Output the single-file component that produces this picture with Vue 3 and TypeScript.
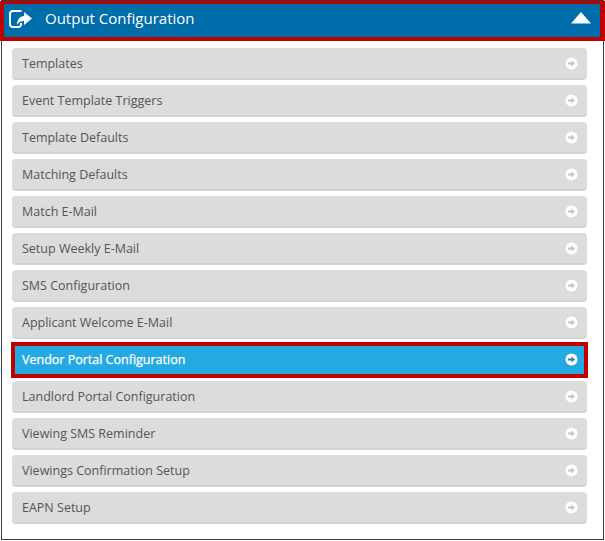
<script setup lang="ts">
const items: string[] = [
  'Templates',
  'Event Template Triggers',
  'Template Defaults',
  'Matching Defaults',
  'Match E-Mail',
  'Setup Weekly E-Mail',
  'SMS Configuration',
  'Applicant Welcome E-Mail',
  'Vendor Portal Configuration',
  'Landlord Portal Configuration',
  'Viewing SMS Reminder',
  'Viewings Confirmation Setup',
  'EAPN Setup',
]
const activeItem = 'Vendor Portal Configuration'
</script>

<template>
  <div class="panel">
    <header class="head">
      <div class="head-left">
        <svg class="export" width="26" height="22" viewBox="0 -1 26 22" aria-hidden="true">
          <path d="M13.500 3H5a3 3 0 0 0-3 3v10a3 3 0 0 0 3 3h5.500a2.500 2.500 0 0 0 2.500-2.500V15" fill="none" stroke="#fff" stroke-width="2" />
          <path d="M16 4 24 10.500 16 17V13C13 13 10.500 14 9 17 9 11.500 12 8 16 8z" fill="#fff" />
        </svg>
        <span class="title">Output Configuration</span>
      </div>
      <svg class="caret" width="22" height="12" viewBox="0 0 22 12" aria-hidden="true">
        <path d="M11 0 21 11.500H1z" fill="#fff" />
      </svg>
    </header>
    <ul class="list">
      <li v-for="item in items" :key="item" class="item" :class="{ active: item === activeItem }">
        <span>{{ item }}</span>
        <svg class="go" width="13" height="13" viewBox="0 0 13 13" aria-hidden="true">
          <circle cx="6.500" cy="6.500" r="6" fill="#fff" />
          <path d="M3 5.500h3.500V3.500L10 6.500 6.500 9.500V7.500H3z" :fill="item === activeItem ? '#2a7fb5' : '#c4c4c4'" />
        </svg>
      </li>
    </ul>
  </div>
</template>

<style>
html, body { margin: 0; background: #fff; }
</style>

<style scoped>
.panel {
  box-sizing: border-box;
  width: 603px;
  height: 540px;
  margin-left: 1px;
  border: 1px solid #3a3a3a;
  background: #fff;
  font-family: "Open Sans", sans-serif;
}
.head {
  box-sizing: border-box;
  width: 605px;
  height: 40px;
  margin-left: -2px;
  border-style: solid;
  border-color: #c00000;
  border-width: 3px 5px 4px 4px;
  background: #006dab;
  display: flex;
  align-items: center;
  justify-content: space-between;
  padding: 0 8px 5px 4px;
  color: #fff;
}
.head-left { display: flex; align-items: center; gap: 11px; }
.title { font-size: 15px; }
.list {
  list-style: none;
  margin: 7px 16px 0 10px;
  padding: 0;
  display: flex;
  flex-direction: column;
  gap: 5px;
}
.item {
  box-sizing: border-box;
  height: 32px;
  display: flex;
  align-items: center;
  justify-content: space-between;
  padding: 0 9px 0 10px;
  background: #dcdcdc;
  border-bottom: 2px solid #d2d2d2;
  border-radius: 4px;
  color: #555;
  font-size: 12.500px;
}
.item.active {
  height: 36px;
  margin: -2px -1px;
  background: #25a9e0;
  border: 4px solid #c00000;
  border-radius: 0;
  padding: 0 6px 2px 7px;
  color: #fff;
  -webkit-text-stroke: 0.25px #fff;
}
</style>
